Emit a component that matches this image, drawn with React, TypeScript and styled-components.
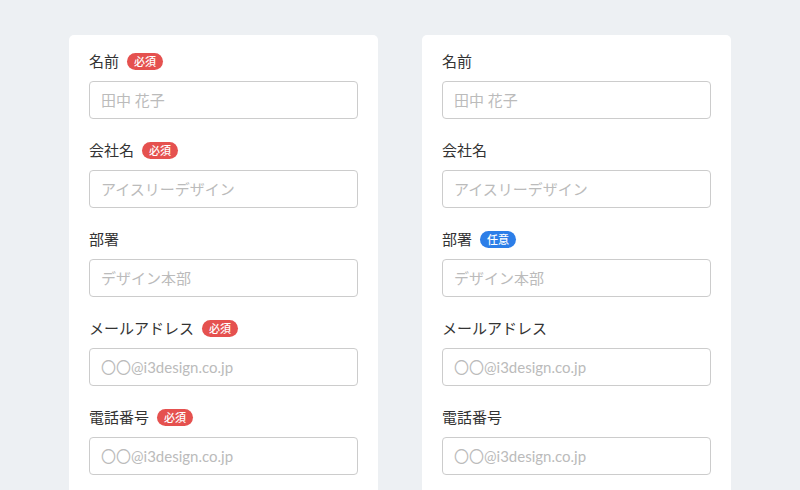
import React from "react";
import styled, {createGlobalStyle} from "styled-components";

type FieldType = {
    label: string
    placeholder: string
    badge?: 'required' | 'optional'
};

const GlobalStyle = createGlobalStyle`
  body {
    margin: 0;
    background: #edf0f3;
    font-family: "Lato", "Noto Sans CJK JP", sans-serif;
  }
`;

const Page = styled.div`
  display: flex;
  gap: 44px;
  padding: 35px 0 0 69px;
  height: 490px;
  box-sizing: border-box;
  overflow: hidden;
`;

const Card = styled.div`
  width: 309px;
  background: #fff;
  border-radius: 5px 5px 0 0;
  padding: 16px 20px 0 20px;
  box-sizing: border-box;
  height: 600px;
`;

const Field = styled.div`
  margin-bottom: 21px;
`;

const LabelRow = styled.div`
  display: flex;
  align-items: center;
  gap: 8px;
  height: 20px;
  margin-bottom: 10px;
`;

const Label = styled.label`
  font-size: 15px;
  line-height: 20px;
  color: #333;
  font-family: "Noto Sans CJK JP", sans-serif;
`;

const Badge = styled.span<{ $kind: 'required' | 'optional' }>`
  display: inline-flex;
  align-items: center;
  justify-content: center;
  height: 17px;
  padding: 0 7px;
  border-radius: 9px;
  font-size: 11px;
  font-weight: 500;
  color: #fff;
  font-family: "Noto Sans CJK JP", sans-serif;
  background: ${p => p.$kind === 'required' ? '#e5514f' : '#2c7ee8'};
`;

const Input = styled.input`
  display: block;
  width: 100%;
  height: 38px;
  box-sizing: border-box;
  border: 1px solid #cccccc;
  border-radius: 4px;
  padding: 0 11px;
  font-size: 15px;
  font-family: "Lato", "Noto Sans CJK JP", sans-serif;
  color: #333;
  outline: none;

  &::placeholder {
    color: #bbbbbb;
  }
`;

const left: FieldType[] = [
    {label: '名前', placeholder: '田中 花子', badge: 'required'},
    {label: '会社名', placeholder: 'アイスリーデザイン', badge: 'required'},
    {label: '部署', placeholder: 'デザイン本部'},
    {label: 'メールアドレス', placeholder: '〇〇@i3design.co.jp', badge: 'required'},
    {label: '電話番号', placeholder: '〇〇@i3design.co.jp', badge: 'required'},
];

const right: FieldType[] = [
    {label: '名前', placeholder: '田中 花子'},
    {label: '会社名', placeholder: 'アイスリーデザイン'},
    {label: '部署', placeholder: 'デザイン本部', badge: 'optional'},
    {label: 'メールアドレス', placeholder: '〇〇@i3design.co.jp'},
    {label: '電話番号', placeholder: '〇〇@i3design.co.jp'},
];

const Form: React.FC<{ fields: FieldType[] }> = ({fields}) => (
    <Card>
        {fields.map((f, i) => (
            <Field key={i}>
                <LabelRow>
                    <Label>{f.label}</Label>
                    {f.badge && <Badge $kind={f.badge}>{f.badge === 'required' ? '必須' : '任意'}</Badge>}
                </LabelRow>
                <Input placeholder={f.placeholder}/>
            </Field>
        ))}
    </Card>
);

const App: React.FC = () => (
    <>
        <GlobalStyle/>
        <Page>
            <Form fields={left}/>
            <Form fields={right}/>
        </Page>
    </>
);

export default App;
